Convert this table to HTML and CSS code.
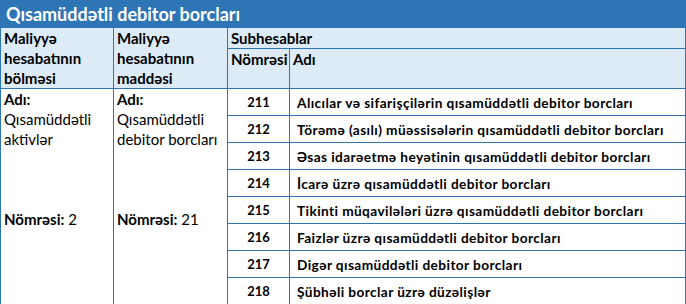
FILE: index.html
```html
<!DOCTYPE html>
<html lang="az">
<head>
<meta charset="utf-8">
<title>Qısamüddətli debitor borcları</title>
<link rel="stylesheet" href="styles.css">
</head>
<body>
<table class="tbl">
  <colgroup>
    <col class="c1"><col class="c2"><col class="c3"><col class="c4">
  </colgroup>
  <thead>
    <tr class="title-row"><th colspan="4" class="title">Qısamüddətli debitor borcları</th></tr>
    <tr class="h1">
      <th rowspan="2" class="hd">Maliyyə<br>hesabatının<br>bölməsi</th>
      <th rowspan="2" class="hd">Maliyyə<br>hesabatının<br>maddəsi</th>
      <th colspan="2" class="hd">Subhesablar</th>
    </tr>
    <tr class="h2">
      <th class="hd">Nömrəsi</th>
      <th class="hd">Adı</th>
    </tr>
  </thead>
  <tbody>
    <tr>
      <td rowspan="8" class="side">
        <div class="lbl">Adı:</div>
        <div>Qısamüddətli</div>
        <div>aktivlər</div>
        <div class="num"><span class="lbl">Nömrəsi:</span> 2</div>
      </td>
      <td rowspan="8" class="side">
        <div class="lbl">Adı:</div>
        <div>Qısamüddətli</div>
        <div>debitor borcları</div>
        <div class="num"><span class="lbl">Nömrəsi:</span> 21</div>
      </td>
      <td class="code">211</td><td class="name">Alıcılar və sifarişçilərin qısamüddətli debitor borcları</td>
    </tr>
    <tr><td class="code">212</td><td class="name">Törəmə (asılı) müəssisələrin qısamüddətli debitor borcları</td></tr>
    <tr><td class="code">213</td><td class="name">Əsas idarəetmə heyətinin qısamüddətli debitor borcları</td></tr>
    <tr><td class="code">214</td><td class="name">İcarə üzrə qısamüddətli debitor borcları</td></tr>
    <tr><td class="code">215</td><td class="name">Tikinti müqavilələri üzrə qısamüddətli debitor borcları</td></tr>
    <tr><td class="code">216</td><td class="name">Faizlər üzrə qısamüddətli debitor borcları</td></tr>
    <tr><td class="code">217</td><td class="name">Digər qısamüddətli debitor borcları</td></tr>
    <tr><td class="code">218</td><td class="name">Şübhəli borclar üzrə düzəlişlər</td></tr>
  </tbody>
</table>
</body>
</html>
```

FILE: styles.css
```css
html, body {
  margin: 0;
  padding: 0;
  background: #ffffff;
}

body {
  font-family: "Lato", "Liberation Sans", sans-serif;
  color: #000;
}

.tbl {
  border-collapse: collapse;
  table-layout: fixed;
  width: 685px;
}

.c1 { width: 113px; }
.c2 { width: 114px; }
.c3 { width: 62px; }
.c4 { width: 396px; }

.tbl th,
.tbl td {
  border: 1px solid #2e75b6;
  padding: 0;
}

.tbl .title {
  background: #2e75b6;
  color: #ffffff;
  font-size: 18px;
  font-weight: 700;
  text-align: left;
  height: 26px;
  padding: 0 0 0 5px;
  line-height: 26px;
  box-sizing: border-box;
}

.h1 { height: 20px; }
.h2 { height: 40px; }

.tbl .hd {
  background: #ddebf7;
  font-size: 15px;
  font-weight: 700;
  line-height: 20px;
  text-align: left;
  vertical-align: top;
  padding: 0 0 0 3px;
  white-space: nowrap;
}

.tbl tbody tr { height: 27px; }

.tbl .side {
  vertical-align: top;
  font-size: 15px;
  line-height: 20px;
  padding: 0 0 0 3px;
  white-space: nowrap;
}

.lbl { font-weight: 700; }

.num { margin-top: 60px; }

.tbl .code {
  text-align: center;
  font-size: 13px;
  font-weight: 700;
  vertical-align: middle;
}

.tbl .name {
  font-size: 13.7px;
  letter-spacing: 0.4px;
  font-weight: 700;
  padding: 0 0 0 7px;
  vertical-align: middle;
  white-space: nowrap;
}
```
